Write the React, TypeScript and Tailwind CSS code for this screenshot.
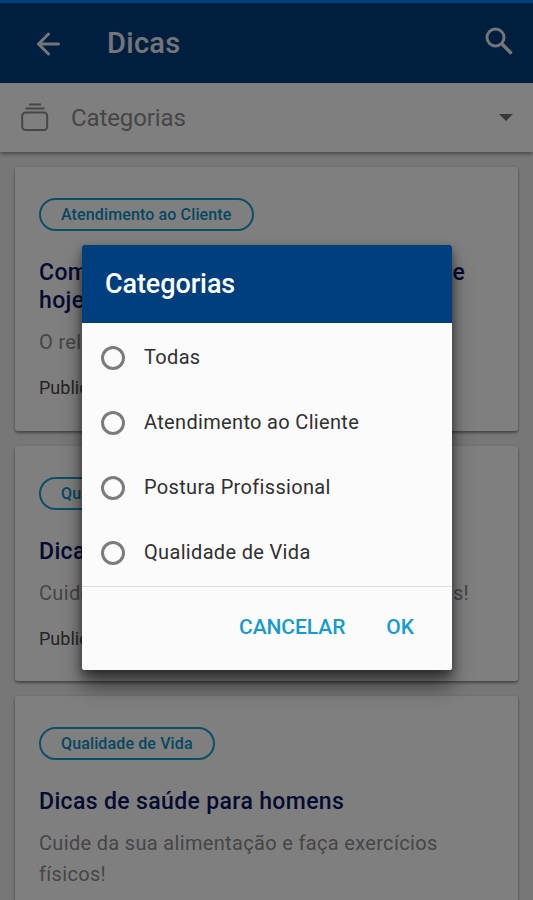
import React from "react";

type Tip = { tag: string; title: string; titleClass: string; text: string; date?: string; cardClass: string };

const tips: Tip[] = [
  {
    tag: "Atendimento ao Cliente",
    title: "Como atender bem ao seu cliente hoje e hoje mesmo",
    titleClass: "w-[440px]",
    text: "O relacionamento com o cliente",
    date: "Publicado em 10/05/2018",
    cardClass: "h-[264px]",
  },
  {
    tag: "Qualidade de Vida",
    title: "Dicas de saúde para mulheres",
    titleClass: "",
    text: "Cuide da alimentação e faça outros exercícios!",
    date: "Publicado em 10/05/2018",
    cardClass: "h-[235px]",
  },
  {
    tag: "Qualidade de Vida",
    title: "Dicas de saúde para homens",
    titleClass: "",
    text: "Cuide da sua alimentação e faça exercícios físicos!",
    cardClass: "h-[250px]",
  },
];

const options = ["Todas", "Atendimento ao Cliente", "Postura Profissional", "Qualidade de Vida"];

function TipCard({ tip }: { tip: Tip }) {
  return (
    <article
      className={`flex shrink-0 flex-col items-start rounded-[3px] bg-white px-6 pt-[31px] shadow-[0_2px_3px_rgba(0,0,0,0.4),0_0_3px_rgba(0,0,0,0.1)] ${tip.cardClass}`}
    >
      <span className="inline-flex h-[33px] shrink-0 items-center rounded-full border-2 border-[#1b9dce] px-5 text-[16px] font-medium tracking-[0.13px] text-[#0b8fc4]">
        {tip.tag}
      </span>
      <h2 className={`mt-[28px] text-[23px] leading-7 font-medium tracking-[0.36px] text-[#0a1562] ${tip.titleClass}`}>
        {tip.title}
      </h2>
      <p className="mt-[12px] text-[20px] leading-[31px] tracking-[0.33px] text-[#8c8c8c]">{tip.text}</p>
      {tip.date && <p className="mt-4 text-[18px] leading-7 text-[#484848]">{tip.date}</p>}
    </article>
  );
}

export default function App() {
  return (
    <div className="relative flex h-[900px] w-[533px] flex-col overflow-hidden bg-[#efefef] font-['Roboto',sans-serif]">
      <div className="h-[3px] shrink-0 bg-[#003f7e]" />
      <header className="flex h-20 shrink-0 items-center bg-[#003f7e] pt-px pr-5 pl-9 text-[#e8eaf2]">
        <svg width="25" height="24" viewBox="0 0 25 24" fill="none" stroke="currentColor" strokeWidth="3" strokeLinecap="round">
          <path d="M22.500 12H2.500M12.500 2 2.500 12l10 10" />
        </svg>
        <h1 className="ml-[46px] flex-1 text-[29px] font-medium tracking-[0.3px]">Dicas</h1>
        <svg className="-mt-[5px]" width="28" height="28" viewBox="0 0 28 28" fill="none" stroke="currentColor" strokeWidth="3">
          <circle cx="10.500" cy="10.500" r="8.500" />
          <path d="m17 17 8.500 8.500" strokeWidth="3.600" strokeLinecap="round" />
        </svg>
      </header>
      <div className="flex h-[69px] shrink-0 items-center bg-white pr-5 pl-[21px] text-[#8c8c8c] shadow-[0_2px_4px_rgba(0,0,0,0.4)]">
        <svg className="-mt-px" width="28" height="29" viewBox="0 0 28 29" fill="none" stroke="currentColor" strokeWidth="2">
          <rect x="1.200" y="9.500" width="25" height="17.500" rx="3.500" />
          <path d="M4.500 5.500h19M8 1.500h12" />
        </svg>
        <span className="ml-[22px] flex-1 pt-px text-[24px] tracking-[-0.1px]">Categorias</span>
        <span className="border-x-[7px] border-t-[7px] border-x-transparent border-t-[#707070]" />
      </div>
      <main className="flex flex-col gap-[15px] px-[15px] pt-[15px]">
        {tips.map((tip) => (
          <TipCard key={tip.title} tip={tip} />
        ))}
      </main>

      <div className="absolute inset-x-0 top-[3px] bottom-0 bg-black/50">
        <section
          role="dialog"
          aria-label="Categorias"
          className="mt-[242px] ml-[82px] flex h-[425px] w-[370px] flex-col overflow-hidden rounded-[2px] bg-[#fbfbfb] shadow-[0_16px_20px_rgba(0,0,0,0.5),0_3px_8px_rgba(0,0,0,0.4)]"
        >
          <h2 className="flex h-[78px] shrink-0 items-center bg-[#003f7e] px-[23px] text-[27px] font-medium tracking-[-0.1px] text-white">Categorias</h2>
          <ul className="flex h-[264px] shrink-0 flex-col border-b border-[#dcdcdc] pt-[2px]">
            {options.map((option) => (
              <li key={option} className="flex h-[65px] shrink-0 items-center pl-[19px]">
                <span className="size-6 rounded-full border-3 border-[#7c7c7c]" />
                <span className="-mt-[2px] ml-[19px] text-[20px] tracking-[0.33px] text-[#303030]">{option}</span>
              </li>
            ))}
          </ul>
          <div className="flex flex-1 items-center justify-end gap-[41px] pr-[38px] pb-px text-[21px] font-medium tracking-[-0.05px] text-[#149bd0]">
            <button>CANCELAR</button>
            <button>OK</button>
          </div>
        </section>
      </div>
    </div>
  );
}
